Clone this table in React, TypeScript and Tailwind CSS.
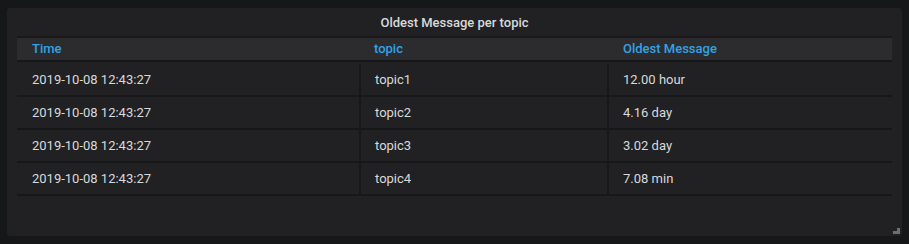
import React from "react";

const rows = [
  ["2019-10-08 12:43:27", "topic1", "12.00 hour"],
  ["2019-10-08 12:43:27", "topic2", "4.16 day"],
  ["2019-10-08 12:43:27", "topic3", "3.02 day"],
  ["2019-10-08 12:43:27", "topic4", "7.08 min"],
];

export default function App() {
  return (
    <div
      className="w-[909px] h-[244px] bg-[#161719] pl-[7px] pt-[8px]"
      style={{ fontFamily: "Roboto, 'Liberation Sans', sans-serif" }}
    >
      <div className="relative w-[895px] h-[228px] bg-[#212124] rounded-[3px] flex flex-col">
        <div className="h-[28px] flex items-center justify-center text-[13px] font-medium text-[#d8d9da] pt-[1px]">
          Oldest Message per topic
        </div>
        <div className="ml-[10px] w-[875px] flex flex-col">
          <div className="h-[2px] bg-[#19191b]" />
          <div className="h-[24px] bg-[#2c2c2f] flex items-center text-[13px] font-medium text-[#33a2e5] border-b-2 border-[#161719]">
            <div className="w-[344px] shrink-0 pl-[15px]">Time</div>
            <div className="w-[248px] shrink-0 pl-[13px]">topic</div>
            <div className="flex-1 pl-[14px]">Oldest Message</div>
          </div>
          <div className="h-[1px]" />
          {rows.map((r, i) => (
            <div
              key={i}
              className={`flex text-[13px] text-[#d8d9da] border-b-2 border-[#161719] ${i === 0 ? "h-[34px] pt-[1px]" : "h-[33px]"}`}
            >
              <div className="w-[344px] shrink-0 pl-[15px] flex items-center border-r-2 border-[#161719]">{r[0]}</div>
              <div className="w-[248px] shrink-0 pl-[14px] flex items-center border-r-2 border-[#161719]">{r[1]}</div>
              <div className="flex-1 pl-[14px] flex items-center">{r[2]}</div>
            </div>
          ))}
        </div>
        <svg
          className="absolute right-[2px] bottom-[2px]"
          width="7"
          height="6"
          viewBox="0 0 7 6"
        >
          <path d="M4 0h3v6H0V3h4z" fill="#6e6e72" />
        </svg>
      </div>
    </div>
  );
}
